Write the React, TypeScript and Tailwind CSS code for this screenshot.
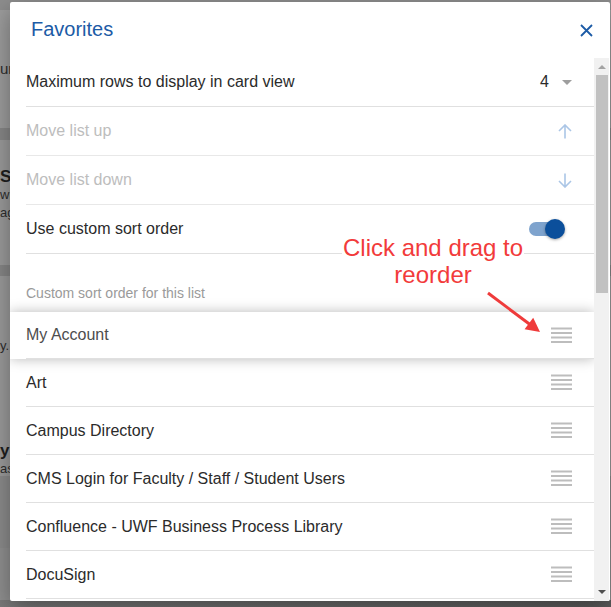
import React from "react";

const items = [
  "Art",
  "Campus Directory",
  "CMS Login for Faculty / Staff / Student Users",
  "Confluence - UWF Business Process Library",
  "DocuSign",
];

function DragHandle() {
  return (
    <svg width="21" height="17" viewBox="0 0 21 17" className="shrink-0">
      {[1.5, 6, 10.5, 15].map((y) => (
        <line key={y} x1="0" x2="21" y1={y} y2={y} stroke="#bdbdbd" strokeWidth="2" />
      ))}
    </svg>
  );
}

function ArrowIcon({ down }: { down?: boolean }) {
  return (
    <svg width="14" height="15" viewBox="0 0 14 15" className="shrink-0">
      {down ? (
        <path d="M7 0.5V14 M1 8L7 14L13 8" fill="none" stroke="#abc6e6" strokeWidth="1.6" />
      ) : (
        <path d="M7 14.5V1 M1 7L7 1L13 7" fill="none" stroke="#abc6e6" strokeWidth="1.6" />
      )}
    </svg>
  );
}

function Toggle() {
  return (
    <div className="relative mr-[7px] flex h-[20px] w-[36px] items-center">
      <div className="h-[14px] w-[30px] rounded-full bg-[#7ea3cd]" />
      <div className="absolute right-0 top-0 h-[20px] w-[20px] rounded-full bg-[#0b4f9b] shadow-[0_1px_3px_rgba(0,0,0,0.35)]" />
    </div>
  );
}

function BackgroundPage() {
  return (
    <div className="flex h-full flex-col text-[13px] text-[#2e2e2e]">
      <div className="h-[10px] bg-[#8d8d8d]" />
      <div className="flex h-[118px] items-center bg-[#9c9c9c]">
        <span className="text-[15px]">ur</span>
      </div>
      <div className="h-[12px] bg-[#878787]" />
      <div className="flex h-[125px] flex-col bg-[#9a9a9a] pt-[28px] leading-[18px]">
        <span className="text-[17px] font-bold text-[#1e1e1e]">S</span>
        <span>wi</span>
        <span>ag</span>
      </div>
      <div className="h-[11px] bg-[#868686]" />
      <div className="flex h-[200px] flex-col bg-[#9a9a9a] pt-[60px]">
        <span>y.</span>
        <span className="mt-[86px] text-[17px] font-bold leading-[18px] text-[#1e1e1e]">y</span>
        <span className="leading-[18px]">as</span>
      </div>
      <div className="h-[72px] bg-[#8b8b8b]" />
      <div className="h-[52px] bg-[#8f8f8f]" />
      <div className="flex-1 bg-gradient-to-r from-[#7a7a7a] to-[#5c5c5c]" />
    </div>
  );
}

export default function App() {
  return (
    <div className="relative h-[607px] w-[611px] overflow-hidden bg-[#8b8b8b] font-['Liberation_Sans',Arial,sans-serif]">
      <BackgroundPage />

      <div className="absolute left-[10px] top-[2px] flex h-[599px] w-[600px] flex-col rounded-[2px] bg-white shadow-[0_8px_24px_rgba(0,0,0,0.35)]">
        {/* header */}
        <div className="flex h-[56px] shrink-0 items-center justify-between pb-[2px] pl-[21px] pr-[17px]">
          <h2 className="text-[20px] leading-6 text-[#1c5ba6]">Favorites</h2>
          <svg width="13" height="13" viewBox="0 0 13 13" className="mt-[2px]">
            <path d="M1 1L12 12 M12 1L1 12" stroke="#1c5ba6" strokeWidth="1.8" />
          </svg>
        </div>

        <div className="flex min-h-0 flex-1">
          {/* scroll content */}
          <div className="relative min-w-0 flex-1 overflow-hidden text-[16px] text-[#2b2b2b]">
            <div className="ml-4 flex h-[49px] items-center justify-between border-b border-[#e0e0e0] pr-[22px]">
              <span>Maximum rows to display in card view</span>
              <div className="flex items-center gap-[13px]">
                <span>4</span>
                <div className="h-0 w-0 border-x-[5px] border-t-[5px] border-x-transparent border-t-[#9e9e9e]" />
              </div>
            </div>
            <div className="ml-4 flex h-[49px] items-center justify-between border-b border-[#e8e8e8] pr-[22px] text-[#bdbdbd]">
              <span>Move list up</span>
              <ArrowIcon />
            </div>
            <div className="ml-4 flex h-[49px] items-center justify-between border-b border-[#e8e8e8] pr-[22px] text-[#bdbdbd]">
              <span>Move list down</span>
              <ArrowIcon down />
            </div>
            <div className="ml-4 flex h-[49px] items-center justify-between border-b border-[#e0e0e0] pr-[22px]">
              <span>Use custom sort order</span>
              <Toggle />
            </div>
            <div className="ml-4 flex h-[58px] items-end pb-[9px] text-[14px] leading-5 text-[#9a9a9a]">
              Custom sort order for this list
            </div>

            {/* item being dragged */}
            <div className="relative z-10 bg-white shadow-[0_0_12px_rgba(0,0,0,0.28)]">
              <div className="ml-4 flex h-[47px] items-center justify-between border-b border-[#e0e0e0] pr-[22px] text-[#4d4d4d]">
                <span>My Account</span>
                <DragHandle />
              </div>
            </div>

            {items.map((name) => (
              <div
                key={name}
                className="ml-4 flex h-[48px] items-center justify-between border-b border-[#e0e0e0] pr-[22px]"
              >
                <span>{name}</span>
                <DragHandle />
              </div>
            ))}
          </div>

          {/* scrollbar */}
          <div className="mr-px flex w-[15px] shrink-0 flex-col bg-[#f1f1f1]">
            <div className="flex h-[17px] items-center justify-center">
              <div className="h-0 w-0 border-x-[4px] border-b-[4px] border-x-transparent border-b-[#a3a3a3]" />
            </div>
            <div className="ml-[2px] mr-[1px] h-[218px] bg-[#c1c1c1]" />
            <div className="flex-1" />
            <div className="flex h-[18px] items-center justify-center">
              <div className="h-0 w-0 border-x-[4px] border-t-[4px] border-x-transparent border-t-[#505050]" />
            </div>
          </div>
        </div>

        {/* annotation */}
        <div className="absolute left-[332px] top-[232px] z-20 text-center text-[24px] leading-[27px] text-[#f23b3b]">
          <span className="bg-white px-[1px]">Click and drag to</span>
          <br />
          <span>reorder</span>
        </div>
        <svg className="absolute left-[470px] top-[283px] z-20" width="70" height="55" viewBox="0 0 70 55">
          <line x1="8" y1="8" x2="50" y2="39.5" stroke="#ef3b3b" strokeWidth="3" />
          <polygon points="60,47 44.6,44.2 53.2,32.8" fill="#ef3b3b" />
        </svg>
      </div>
    </div>
  );
}
